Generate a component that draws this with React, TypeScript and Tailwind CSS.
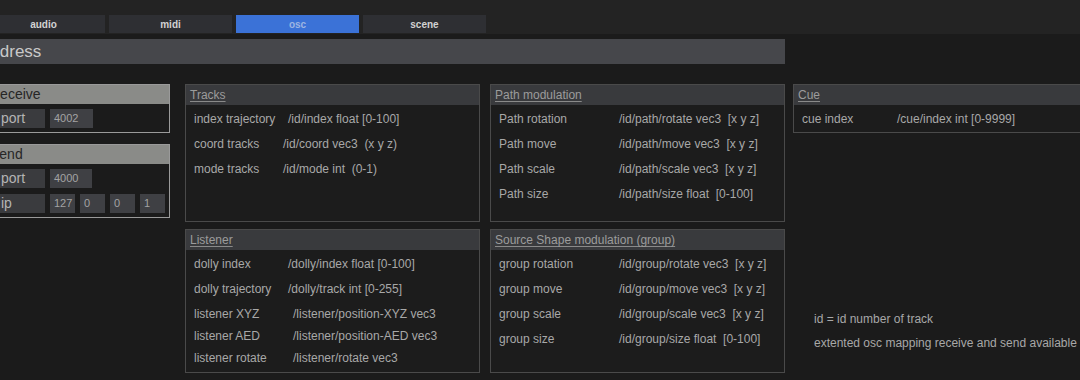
const font = { fontFamily: '"Liberation Sans", Arial, sans-serif' };

type Row = { label: string; value: string; w: number; h?: number };

const tracks: Row[] = [
  { label: 'index trajectory', value: '/id/index float [0-100]', w: 94 },
  { label: 'coord tracks', value: '/id/coord vec3  (x y z)', w: 89 },
  { label: 'mode tracks', value: '/id/mode int  (0-1)', w: 89 },
];

const listener: Row[] = [
  { label: 'dolly index', value: '/dolly/index float [0-100]', w: 94, h: 24 },
  { label: 'dolly trajectory', value: '/dolly/track int [0-255]', w: 94, h: 25 },
  { label: 'listener XYZ', value: '/listener/position-XYZ vec3', w: 99, h: 25 },
  { label: 'listener AED', value: '/listener/position-AED vec3', w: 99, h: 19 },
  { label: 'listener rotate', value: '/listener/rotate vec3', w: 99, h: 26 },
];

const pathMod: Row[] = [
  { label: 'Path rotation', value: '/id/path/rotate vec3  [x y z]', w: 120 },
  { label: 'Path move', value: '/id/path/move vec3  [x y z]', w: 120 },
  { label: 'Path scale', value: '/id/path/scale vec3  [x y z]', w: 120 },
  { label: 'Path size', value: '/id/path/size float  [0-100]', w: 120 },
];

const groupMod: Row[] = [
  { label: 'group rotation', value: '/id/group/rotate vec3  [x y z]', w: 120 },
  { label: 'group move', value: '/id/group/move vec3  [x y z]', w: 120 },
  { label: 'group scale', value: '/id/group/scale vec3  [x y z]', w: 120 },
  { label: 'group size', value: '/id/group/size float  [0-100]', w: 120 },
];

function Panel({ title, rows, height, pt = 'pt-[1px]' }: { title: string; rows: Row[]; height: string; pt?: string }) {
  return (
    <div className={`w-[295px] ${height} border border-[#4a4a4a] bg-[#1c1c1c] flex flex-col`}>
      <div className="h-[20px] bg-[#393a3d] flex items-center pl-[4px] shrink-0">
        <span className="text-[12px] text-[#9c9c9c] underline underline-offset-2 decoration-[#8a8a8a]">{title}</span>
      </div>
      <div className={`${pt} pl-[8px]`}>
        {rows.map((r) => (
          <div key={r.label} className="flex items-center text-[12px] text-[#a8a8a8] whitespace-pre" style={{ height: r.h ?? 25 }}>
            <span className="shrink-0" style={{ width: r.w }}>{r.label}</span>
            <span>{r.value}</span>
          </div>
        ))}
      </div>
    </div>
  );
}

function Field({ children, w }: { children: React.ReactNode; w: string }) {
  return (
    <div className={`${w} h-[19px] bg-[#3f4044] text-[11px] text-[#a3a3a3] flex items-center pl-[4px]`}>{children}</div>
  );
}

function Label({ children }: { children: React.ReactNode }) {
  return (
    <div className="w-[50px] h-[19px] bg-[#3a3b3e] text-[14px] text-[#b4b4b4] flex items-center pl-[6px]">{children}</div>
  );
}

export default function App() {
  return (
    <div className="w-[1080px] h-[380px] overflow-hidden bg-[#1b1b1b]" style={font}>
      {/* tabs */}
      <div className="h-[34px] bg-[#232323] pt-[15px] flex gap-[4px] -ml-[18px]">
        {['audio', 'midi', 'osc', 'scene'].map((t) => (
          <div
            key={t}
            className={`w-[123px] h-[18px] flex items-center justify-center text-[10px] font-bold ${
              t === 'osc' ? 'bg-[#3b72d7] text-[#9db5e2]' : 'bg-[#2e2f33] text-[#d2d2d2]'
            }`}
          >
            {t}
          </div>
        ))}
      </div>

      {/* title */}
      <div className="mt-[5px] w-[785px] h-[25px] bg-[#46474b] flex items-center overflow-hidden">
        <span className="-ml-[21px] text-[17px] text-[#c9c9c9]">Address</span>
      </div>

      <div className="mt-[20px] flex items-start">
        {/* left column */}
        <div className="-ml-[10px] w-[180px] flex flex-col gap-[11px] shrink-0">
          <div className="border border-[#9a9a9a] h-[49px] overflow-hidden">
            <div className="h-[19px] bg-[#8a8b88] text-[14px] text-[#262626] flex items-center">
              <span className="-ml-[1px]">Receive</span>
            </div>
            <div className="pt-[5px] pl-[4px] flex gap-[5px]">
              <Label>port</Label>
              <Field w="w-[43px]">4002</Field>
            </div>
          </div>
          <div className="border border-[#9a9a9a] h-[74px] overflow-hidden">
            <div className="h-[19px] bg-[#8a8b88] text-[14px] text-[#262626] flex items-center">
              <span className="-ml-[1px]">Send</span>
            </div>
            <div className="pt-[5px] pl-[4px] flex flex-col gap-[6px]">
              <div className="flex gap-[5px]">
                <Label>port</Label>
                <Field w="w-[42px]">4000</Field>
              </div>
              <div className="flex gap-[5px]">
                <Label>ip</Label>
                <Field w="w-[25px]">127</Field>
                <Field w="w-[25px]">0</Field>
                <Field w="w-[25px]">0</Field>
                <Field w="w-[25px]">1</Field>
              </div>
            </div>
          </div>
        </div>

        {/* middle columns */}
        <div className="ml-[15px] flex flex-col gap-[7px]">
          <Panel title="Tracks" rows={tracks} height="h-[138px]" />
          <Panel title="Listener" rows={listener} height="h-[144px]" pt="pt-[2px]" />
        </div>
        <div className="ml-[10px] flex flex-col gap-[7px]">
          <Panel title="Path modulation" rows={pathMod} height="h-[138px]" />
          <Panel title="Source Shape modulation (group)" rows={groupMod} height="h-[144px]" />
        </div>

        {/* cue column */}
        <div className="ml-[8px] shrink-0">
          <div className="w-[295px] h-[49px] border border-[#4a4a4a] bg-[#1c1c1c]">
            <div className="h-[20px] bg-[#393a3d] flex items-center pl-[4px]">
              <span className="text-[12px] text-[#9c9c9c] underline underline-offset-2 decoration-[#8a8a8a]">Cue</span>
            </div>
            <div className="pl-[8px] pt-[2px] flex items-center h-[25px] text-[12px] text-[#a8a8a8]">
              <span className="w-[95px]">cue index</span>
              <span>/cue/index int [0-9999]</span>
            </div>
          </div>
          <div className="mt-[174px] pl-[21px] text-[12px] text-[#a8a8a8] whitespace-nowrap">
            <div className="h-[24px] flex items-center">id = id number of track</div>
            <div className="h-[24px] flex items-center">extented osc mapping receive and send available</div>
          </div>
        </div>
      </div>
    </div>
  );
}
